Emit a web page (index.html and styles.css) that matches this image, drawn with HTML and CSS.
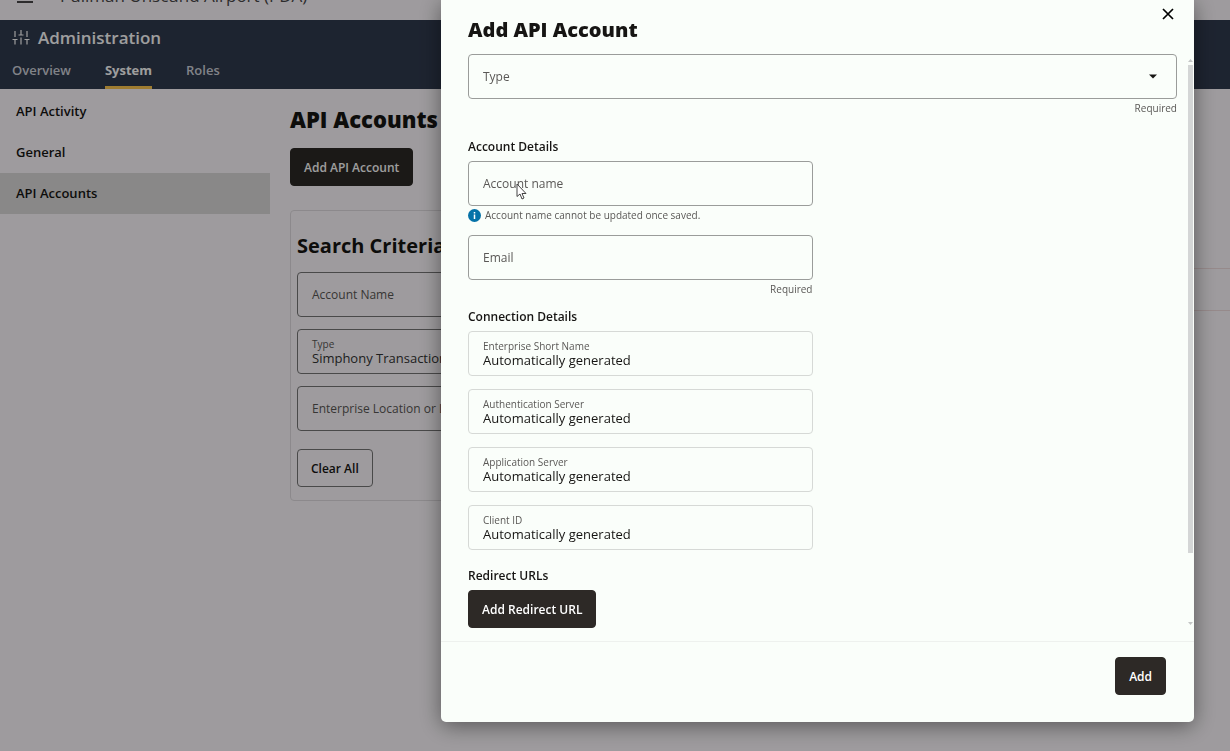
FILE: index.html
```html
<!DOCTYPE html>
<html lang="en">
<head>
  <meta charset="UTF-8" />
  <meta name="viewport" content="width=device-width, initial-scale=1.0" />
  <title>API Accounts</title>
  <link rel="stylesheet" href="styles.css">
</head>
<body>
  <div class="page">
    <!-- Location bar -->
    <div class="topbar">
      <button type="button" class="menu-button" aria-label="Menu">
        <svg width="18" height="16" viewBox="0 0 18 16"><path d="M1 2h16M1 8h16M1 14h16" stroke="currentColor" stroke-width="2" /></svg>
      </button>
      <span class="location">Pullman Unscund Airport (PDA)</span>
    </div>

    <header class="header">
      <div class="header-title">
        <svg width="18" height="18" viewBox="0 0 18 18" fill="none" stroke="currentColor" stroke-width="1.2">
          <path d="M3 2v6M0.500 10.500h5M3 10.500v5M9 1v5M6.500 6h5M9 8.500v7M15 2v6M12.500 10.500h5M15 10.500v5" />
        </svg>
        <h1>Administration</h1>
      </div>
      <nav class="tabs">
        <a href="#">Overview</a>
        <a href="#" class="active">System</a>
        <a href="#">Roles</a>
      </nav>
    </header>

    <div class="content">
      <nav class="sidebar">
        <a href="#">API Activity</a>
        <a href="#">General</a>
        <a href="#" class="active">API Accounts</a>
      </nav>

      <main class="main">
        <h2>API Accounts</h2>
        <button type="button" class="button">Add API Account</button>

        <div class="columns">
          <form class="panel">
            <h2>Search Criteria</h2>
            <div class="field">
              <label for="searchName">Account Name</label>
              <input type="text" id="searchName" />
            </div>
            <div class="field filled">
              <label for="searchType">Type</label>
              <select id="searchType"><option>Simphony Transaction Services</option></select>
            </div>
            <div class="field">
              <label for="searchLocation">Enterprise Location or Location</label>
              <input type="text" id="searchLocation" />
            </div>
            <button type="button" class="button outlined">Clear All</button>
          </form>
          <div class="results"></div>
        </div>
      </main>
    </div>
  </div>

  <!-- Add API Account dialog -->
  <div class="overlay">
    <div class="modal" role="dialog" aria-labelledby="modalTitle">
      <div class="modal-header">
        <h2 id="modalTitle">Add API Account</h2>
        <button type="button" class="close-button" aria-label="Close">
          <svg width="14" height="14" viewBox="0 0 14 14"><path d="M2 2l10 10M12 2l-10 10" stroke="currentColor" stroke-width="1.700" /></svg>
        </button>
      </div>

      <div class="modal-body">
        <form class="form">
          <div class="field">
            <label for="type">Type</label>
            <select id="type"><option></option></select>
            <svg class="caret" width="8" height="5" viewBox="0 0 8 5"><path d="M0 0.500h8l-4 4z" fill="currentColor" /></svg>
          </div>
          <p class="hint required">Required</p>

          <div class="form-column">
            <h3 class="first">Account Details</h3>
            <div class="field">
              <label for="accountName">Account name</label>
              <input type="text" id="accountName" />
              <svg class="cursor" width="11" height="17" viewBox="0 0 11 17"><path d="M1 1v12.500l3-2.500 2 5 2-1-2-4.500h4z" fill="#fff" stroke="#444" /></svg>
            </div>
            <p class="hint info">
              <svg width="13" height="13" viewBox="0 0 13 13"><circle cx="6.500" cy="6.500" r="6.500" fill="#0572a8" /><path d="M6.500 3v1.500M6.500 5.500v4.500" stroke="#fff" stroke-width="1.500" /></svg>
              Account name cannot be updated once saved.
            </p>
            <div class="field">
              <label for="email">Email</label>
              <input type="email" id="email" />
            </div>
            <p class="hint required">Required</p>

            <h3>Connection Details</h3>
            <div class="readonly-list">
              <div class="field filled readonly">
                <label for="shortName">Enterprise Short Name</label>
                <input type="text" id="shortName" value="Automatically generated" readonly />
              </div>
              <div class="field filled readonly">
                <label for="authServer">Authentication Server</label>
                <input type="text" id="authServer" value="Automatically generated" readonly />
              </div>
              <div class="field filled readonly">
                <label for="appServer">Application Server</label>
                <input type="text" id="appServer" value="Automatically generated" readonly />
              </div>
              <div class="field filled readonly">
                <label for="clientId">Client ID</label>
                <input type="text" id="clientId" value="Automatically generated" readonly />
              </div>
            </div>

            <h3>Redirect URLs</h3>
            <button type="button" class="button">Add Redirect URL</button>
          </div>
        </form>
        <div class="scrollbar">
          <svg width="5" height="3" viewBox="0 0 5 3"><path d="M0 3l2.500-3 2.500 3z" fill="currentColor" /></svg>
          <div class="scrollbar-track"><div class="scrollbar-thumb"></div></div>
          <svg width="5" height="3" viewBox="0 0 5 3"><path d="M0 0l2.500 3 2.500-3z" fill="currentColor" /></svg>
        </div>
      </div>

      <div class="modal-footer">
        <button type="button" class="button">Add</button>
      </div>
    </div>
  </div>
</body>
</html>
```

FILE: styles.css
```css
:root {
  --text: #161513;
  --label: #5a5856;
  --border: #9a9c9a;
  --button: #2d2926;
  --surface: #fafefa;
}

* {
  box-sizing: border-box;
  margin: 0;
  padding: 0;
  font-family: "Open Sans", "Noto Sans", sans-serif;
}

body {
  background: #fffbff;
  color: var(--text);
  font-size: 13px;
  overflow: hidden;
}

a {
  color: inherit;
  text-decoration: none;
}

h2 {
  font-size: 20px;
  line-height: 28px;
  font-weight: 800;
}

/* Top bar, scrolled partly out of view */
.topbar {
  display: flex;
  align-items: flex-end;
  height: 20px;
  padding: 0 16px 16px;
  gap: 26px;
  color: #4a484a;
}

.menu-button {
  background: none;
  border: none;
  line-height: 0;
  color: inherit;
}

.location {
  font-size: 17px;
  line-height: 17px;
}

.header {
  background: #303a4e;
  color: #fff;
  padding: 6px 12px 0;
}

.header-title {
  display: flex;
  align-items: center;
  gap: 8px;
}

.header-title h1 {
  font-size: 17px;
  line-height: 24px;
  font-weight: 600;
}

.tabs {
  display: flex;
  gap: 34px;
}

.tabs a {
  padding: 11px 0 7px;
  line-height: 18px;
  font-weight: 600;
  color: #d0d4dc;
  border-bottom: 3px solid transparent;
}

.tabs .active {
  color: #fff;
  font-weight: 700;
  border-color: #ffc94f;
}

.content {
  display: flex;
}

.sidebar {
  width: 270px;
  padding-top: 2px;
}

.sidebar a {
  display: block;
  padding: 0 16px;
  line-height: 41px;
  font-weight: 600;
}

.sidebar .active {
  background: #dddcdb;
}

.main {
  flex: 1;
  padding: 16px 0 0 20px;
}

.main > h2 {
  margin-bottom: 15px;
  font-size: 22px;
}

.columns {
  display: flex;
  gap: 12px;
  margin-top: 24px;
}

.panel {
  width: 300px;
  padding: 21px 6px 13px;
  border: 1px solid #e2dee2;
  border-radius: 4px;
}

.panel h2 {
  margin-bottom: 12px;
  font-weight: 700;
}

.panel .field {
  margin-bottom: 12px;
  border-color: #777;
}

.panel .button {
  margin-top: 6px;
}

/* Outline of the results row */
.results {
  flex: 1;
  height: 43px;
  margin-top: 58px;
  border: 1px solid #f3dfe0;
  border-width: 1px 0;
}

/* Buttons */
.button {
  height: 38px;
  padding: 0 13px;
  background: var(--button);
  color: #fff;
  border: 1px solid var(--button);
  border-radius: 4px;
  font-size: 12px;
  font-weight: 600;
  cursor: pointer;
}

.outlined {
  background: transparent;
  color: var(--text);
  border-color: #777;
}

/* Fields: the label shares the cell of an empty control */
.field {
  display: grid;
  height: 45px;
  border: 1px solid var(--border);
  border-radius: 4px;
}

.field label,
.field input,
.field select {
  grid-area: 1 / 1;
  padding: 0 14px;
}

.field label {
  align-self: center;
  color: var(--label);
  font-size: 12px;
  line-height: 16px;
}

.field input,
.field select {
  width: 100%;
  border: none;
  outline: none;
  background: transparent;
  appearance: none;
  color: #333;
  font-size: 13px;
}

.filled {
  align-content: center;
}

.filled label {
  font-size: 10px;
  line-height: 12px;
}

.filled input,
.filled select {
  grid-area: 2 / 1;
  height: 16px;
  line-height: 16px;
}

.readonly {
  border-color: #d6d9d6;
}

.readonly input {
  color: var(--text);
}

.caret {
  grid-area: 1 / 1;
  place-self: center end;
  margin-right: 19px;
}

.cursor {
  grid-area: 1 / 1;
  align-self: end;
  margin: 0 0 5px 47px;
}

.hint {
  color: var(--label);
  font-size: 10px;
  line-height: 18px;
}

.required {
  text-align: right;
}

.info {
  display: flex;
  align-items: center;
  gap: 4px;
  margin-bottom: 11px;
}

/* Modal */
.overlay {
  position: fixed;
  inset: 0;
  display: flex;
  justify-content: flex-end;
  align-items: flex-start;
  padding-right: 36px;
  background: rgba(0, 0, 0, 0.38);
}

.modal {
  width: 64%;
  max-width: 753px;
  background: var(--surface);
  border-radius: 0 0 5px 5px;
  box-shadow: 0 4px 22px rgba(0, 0, 0, 0.45);
}

.modal-header {
  display: flex;
  justify-content: space-between;
  padding: 7px 19px 10px 27px;
}

.modal-header h2 {
  padding-top: 9px;
}

.close-button {
  height: 14px;
  border: none;
  background: none;
  line-height: 0;
  cursor: pointer;
}

.modal-body {
  display: flex;
  border-bottom: 1px solid #eef1ee;
}

.form {
  flex: 1;
  padding: 0 10px 13px 27px;
}

.form-column {
  width: calc(50% - 10px);
}

.form h3 {
  margin-bottom: 4px;
  padding-top: 9px;
  font-size: 12px;
  line-height: 20px;
  font-weight: 600;
}

.form .first {
  padding-top: 20px;
}

.readonly-list {
  display: flex;
  flex-direction: column;
  gap: 13px;
  margin-bottom: 7px;
}

.scrollbar {
  display: flex;
  flex-direction: column;
  align-items: center;
  width: 7px;
  padding: 5px 1px 16px 0;
  color: #c4c6c6;
}

.scrollbar-track {
  flex: 1;
  width: 5px;
  margin: 3px 0;
}

.scrollbar-thumb {
  height: 88%;
  background: #d4d6d6;
}

.modal-footer {
  display: flex;
  justify-content: flex-end;
  padding: 15px 28px 27px;
}
```
